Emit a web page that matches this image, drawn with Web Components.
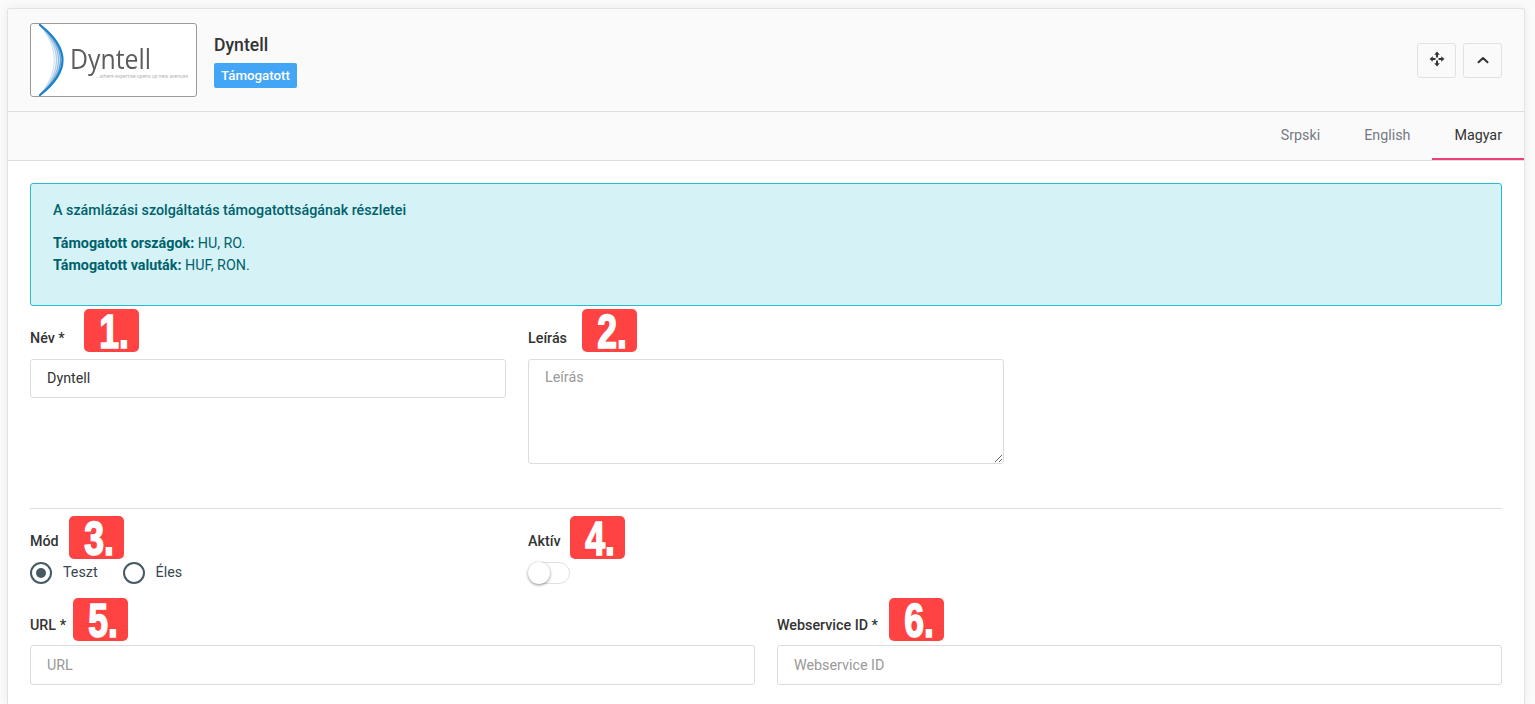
<!DOCTYPE html>
<html lang="hu"><head><meta charset="utf-8"><title>Dyntell</title>
<style>
html,body{margin:0;height:704px;overflow:hidden;background:#fafafa}
body{padding:8px 10px 0 7px;box-sizing:border-box;font:14.3px/21px Roboto,sans-serif;color:#333}
.row{display:grid;column-gap:22px}
.r3{grid-template-columns:repeat(3,1fr)}
.r2{grid-template-columns:repeat(2,1fr)}
.f1{margin-bottom:44px}
.radios{display:flex;gap:25px;height:22px}
</style></head><body>
<template id="t-card"><style>
:host{display:block;box-sizing:border-box;background:#fff;border:1px solid #e2e2e2;border-bottom:0;border-radius:3px 3px 0 0;box-shadow:0 0 8px rgba(0,0,0,.06);height:696px}
.body{padding:22px 22px 0}
</style><slot name="head"></slot><slot name="tabs"></slot><div class="body"><slot></slot></div></template>

<template id="t-head"><style>
:host{display:flex;align-items:center;background:#fafafa;height:102px;padding:0 22px;border-bottom:1px solid #dedede;border-radius:3px 3px 0 0}
.main{flex:1;padding-left:17px;display:flex;flex-direction:column;align-items:flex-start}
.title{font:500 17.6px/22px Roboto,sans-serif;color:#333;margin-bottom:7px;margin-top:1px}
.actions{display:flex;gap:7px}
</style><slot name="logo"></slot><div class="main"><div class="title"><slot name="title"></slot></div><slot name="badge"></slot></div><div class="actions"><slot name="actions"></slot></div></template>

<template id="t-logo"><style>
:host{display:block;width:167px;height:74px;box-sizing:border-box;background:#fff;border:1px solid #999;border-radius:3px;overflow:hidden}
svg{display:block}
</style><svg width="165" height="72" viewBox="0 0 165 72">
<defs><filter id="b"><feGaussianBlur stdDeviation=".45"/></filter><filter id="c"><feGaussianBlur stdDeviation=".45"/></filter></defs>
<g fill="none" stroke-linecap="round" filter="url(#b)">
<path d="M9 1Q38 36 9 71" stroke="#d4e4f2" stroke-width="1.2"/>
<path d="M9 1Q42 36 9 71" stroke="#b3d0ea" stroke-width="1.3"/>
<path d="M9 1Q46 36 9 71" stroke="#8fbce2" stroke-width="1.4"/>
<path d="M9 1Q50 36 9 71" stroke="#5da4da" stroke-width="1.6"/>
<path d="M9 1Q54 36 9 71" stroke="#1a80c8" stroke-width="2.200"/>
</g>
<text x="39" y="45" font-family="'Open Sans',sans-serif" font-size="27" fill="#5c5c5c" filter="url(#c)" textLength="81" lengthAdjust="spacingAndGlyphs">Dyntell</text>
<text x="65" y="54" font-family="'Open Sans',sans-serif" font-size="4.7" fill="#a8a8a8" textLength="92" lengthAdjust="spacingAndGlyphs">...where expertise opens up new avenues</text>
</svg></template>

<template id="t-badge"><style>
:host{display:block;box-sizing:border-box;background:#42a5f5;color:#fff;font:500 13.3px/25px Roboto,sans-serif;padding:0 7px;border-radius:2px;height:25px}
</style><slot></slot></template>

<template id="t-btn"><style>
:host{display:flex;box-sizing:border-box;align-items:center;justify-content:center;width:39px;height:35px;border:1px solid #e2e2e2;border-radius:3px;background:#fafafa}
</style><slot></slot></template>

<template id="t-tabs"><style>
:host{display:flex;justify-content:flex-end;background:#fafafa;height:48px;border-bottom:1px solid #dedede}
</style><slot></slot></template>

<template id="t-tab"><style>
:host{display:block;padding:13px 22px 0;font:14.3px/21px Roboto,sans-serif;color:#757b85;height:35px}
:host([active]){color:#333;box-shadow:inset 0 -2px 0 #ec407a}
</style><slot></slot></template>

<template id="t-alert"><style>
:host{display:block;box-sizing:border-box;height:123px;background:#d5f3f7;border:1px solid #26bcd4;border-radius:3px;color:#00616b;padding:15px 22px;margin-bottom:22px;font:14.3px/22px Roboto,sans-serif}
.h{font-weight:500;margin-bottom:11px}
</style><div class="h"><slot name="title"></slot></div><slot></slot></template>

<template id="t-field"><style>
:host{display:block;position:relative}
label{display:block;font:500 14.3px/21px Roboto,sans-serif;color:#333;margin-bottom:10px;white-space:nowrap}
:host([compact]) label{margin-bottom:9px}
</style><label><slot name="label"></slot></label><slot></slot></template>

<template id="t-mark"><style>
:host{position:absolute;width:55px;height:43px;background:#ff4343;border-radius:5px;color:#fff;display:flex;align-items:center;justify-content:center}
span{font:700 48px/43px "Liberation Sans Narrow","Liberation Sans",sans-serif;-webkit-text-stroke:1.7px #fff;display:block;transform:translate(3px,1px) scaleX(.74);white-space:nowrap}
</style><span><slot></slot></span></template>

<template id="t-input"><style>
:host{display:block}
input,textarea{display:block;width:100%;box-sizing:border-box;border:1px solid #dcdcdc;border-radius:3px;background:#fff;font:14.3px/21px Roboto,sans-serif;color:#333;padding:7px 16px;outline:0;margin:0}
input{height:39px;padding:6px 16px 8px}
textarea{height:105px;resize:vertical}
input::placeholder,textarea::placeholder{color:#999;opacity:1}
:host([tall]) input{height:40px;padding:7px 16px}
</style></template>

<template id="t-radio"><style>
:host{display:flex;align-items:center;gap:11px;font:14.3px/22px Roboto,sans-serif;color:#37474f}
i{display:block;box-sizing:border-box;width:22px;height:22px;border:2px solid #455a64;border-radius:50%;position:relative}
:host([checked]) i::after{content:"";position:absolute;left:4px;top:4px;width:10px;height:10px;border-radius:50%;background:#455a64}
span{display:block;margin-top:-2px}
</style><i></i><span><slot></slot></span></template>

<template id="t-toggle"><style>
:host{display:block;box-sizing:border-box;width:42px;height:22px;border:1px solid #e0e0e0;border-radius:11px;background:#fff;position:relative}
i{position:absolute;left:-1px;top:-1px;width:22px;height:22px;border-radius:50%;background:#fff;box-shadow:0 1px 3px rgba(0,0,0,.45)}
</style><i></i></template>

<app-card>
 <card-head slot="head">
  <dyntell-logo slot="logo"></dyntell-logo>
  <span slot="title">Dyntell</span>
  <status-badge slot="badge">Támogatott</status-badge>
  <icon-button slot="actions"><svg width="16" height="16" viewBox="0 0 16 16" fill="#333" style="margin-top:-2px"><path d="M8 .6 10.800 3.800H9V6.500H7V3.800H5.200zM8 15.400 5.200 12.200H7V9.500H9V12.200H10.800zM.6 8 3.800 5.200V7H6.500V9H3.800V10.800zM15.400 8 12.200 10.800V9H9.500V7H12.200V5.200z"/></svg></icon-button>
  <icon-button slot="actions"><svg width="14" height="14" viewBox="0 0 14 14" fill="none" stroke="#333" stroke-width="2" stroke-linecap="round" stroke-linejoin="round"><path d="M2.500 9.300 7 5 11.500 9.300"/></svg></icon-button>
 </card-head>
 <lang-tabs slot="tabs"><lang-tab>Srpski</lang-tab><lang-tab>English</lang-tab><lang-tab active>Magyar</lang-tab></lang-tabs>

 <info-alert><span slot="title">A számlázási szolgáltatás támogatottságának részletei</span>
  <div><b>Támogatott országok:</b> HU, RO.</div>
  <div><b>Támogatott valuták:</b> HUF, RON.</div>
 </info-alert>

 <div class="row r3 f1">
  <form-field><span slot="label">Név *</span><mark-num style="left:54px;top:-19px">1.</mark-num><text-input value="Dyntell"></text-input></form-field>
  <form-field><span slot="label">Leírás</span><mark-num style="left:54px;top:-19px">2.</mark-num><text-input multi placeholder="Leírás"></text-input></form-field>
 </div>
 <hr style="border:0;border-top:1px solid #dedede;margin:0 0 22px">
 <div class="row r3" style="margin-bottom:31px">
  <form-field><span slot="label">Mód</span><mark-num style="left:39px;top:-15px">3.</mark-num>
   <div class="radios"><radio-opt checked>Teszt</radio-opt><radio-opt>Éles</radio-opt></div></form-field>
  <form-field><span slot="label">Aktív</span><mark-num style="left:42px;top:-15px">4.</mark-num><toggle-switch></toggle-switch></form-field>
 </div>
 <div class="row r2">
  <form-field compact><span slot="label">URL *</span><mark-num style="left:43px;top:-17px">5.</mark-num><text-input tall placeholder="URL"></text-input></form-field>
  <form-field compact><span slot="label">Webservice ID *</span><mark-num style="left:112px;top:-17px">6.</mark-num><text-input tall placeholder="Webservice ID"></text-input></form-field>
 </div>
</app-card>

<script>
const def=(tag,tpl,extra)=>customElements.define(tag,class extends HTMLElement{
 constructor(){super();const r=this.attachShadow({mode:"open"});r.appendChild(document.getElementById(tpl).content.cloneNode(true));}
 connectedCallback(){extra&&extra(this)}
});
def("app-card","t-card");def("card-head","t-head");def("dyntell-logo","t-logo");def("status-badge","t-badge");
def("icon-button","t-btn");def("lang-tabs","t-tabs");def("lang-tab","t-tab");def("info-alert","t-alert");
def("form-field","t-field");
def("mark-num","t-mark");def("radio-opt","t-radio");def("toggle-switch","t-toggle");
def("text-input","t-input",el=>{
 const r=el.shadowRoot;if(r.querySelector("input,textarea"))return;
 const c=document.createElement(el.hasAttribute("multi")?"textarea":"input");
 if(el.getAttribute("placeholder"))c.placeholder=el.getAttribute("placeholder");
 if(el.getAttribute("value"))c.setAttribute("value",el.getAttribute("value"));
 r.appendChild(c);
});
</script>
</body></html>
